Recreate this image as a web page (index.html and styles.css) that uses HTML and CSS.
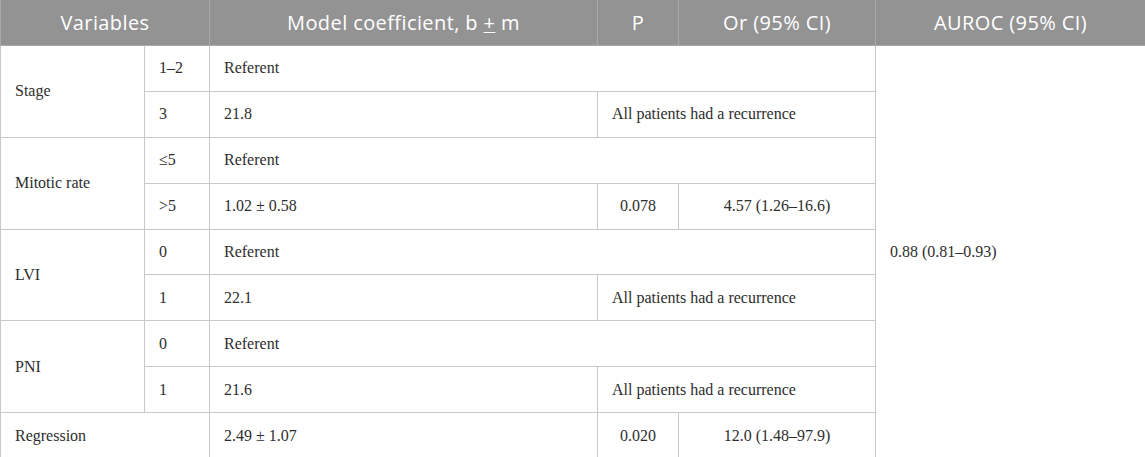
FILE: index.html
```html
<!DOCTYPE html>
<html>
<head>
<meta charset="utf-8">
<link rel="stylesheet" href="styles.css">
</head>
<body>
<table class="data">
  <colgroup>
    <col class="c1"><col class="c2"><col class="c3"><col class="c4"><col class="c5"><col class="c6">
  </colgroup>
  <thead>
    <tr>
      <th colspan="2">Variables</th>
      <th>Model coefficient, b <u>+</u> m</th>
      <th>P</th>
      <th>Or (95% CI)</th>
      <th>AUROC (95% CI)</th>
    </tr>
  </thead>
  <tbody>
    <tr>
      <td rowspan="2">Stage</td>
      <td>1–2</td>
      <td colspan="3">Referent</td>
      <td rowspan="9">0.88 (0.81–0.93)</td>
    </tr>
    <tr>
      <td>3</td>
      <td>21.8</td>
      <td colspan="2">All patients had a recurrence</td>
    </tr>
    <tr>
      <td rowspan="2">Mitotic rate</td>
      <td>≤5</td>
      <td colspan="3">Referent</td>
    </tr>
    <tr>
      <td>&gt;5</td>
      <td>1.02 ± 0.58</td>
      <td class="ctr">0.078</td>
      <td class="ctr">4.57 (1.26–16.6)</td>
    </tr>
    <tr>
      <td rowspan="2">LVI</td>
      <td>0</td>
      <td colspan="3">Referent</td>
    </tr>
    <tr>
      <td>1</td>
      <td>22.1</td>
      <td colspan="2">All patients had a recurrence</td>
    </tr>
    <tr>
      <td rowspan="2">PNI</td>
      <td>0</td>
      <td colspan="3">Referent</td>
    </tr>
    <tr>
      <td>1</td>
      <td>21.6</td>
      <td colspan="2">All patients had a recurrence</td>
    </tr>
    <tr>
      <td colspan="2">Regression</td>
      <td>2.49 ± 1.07</td>
      <td class="ctr">0.020</td>
      <td class="ctr">12.0 (1.48–97.9)</td>
    </tr>
  </tbody>
</table>
</body>
</html>
```
FILE: styles.css
```css
html, body {
  margin: 0;
  padding: 0;
  background: #ffffff;
}

.data {
  width: 1145px;
  table-layout: fixed;
  border-collapse: collapse;
}

.c1 { width: 144px; }
.c2 { width: 65px; }
.c3 { width: 388px; }
.c4 { width: 81px; }
.c5 { width: 197px; }
.c6 { width: 270px; }

.data th {
  height: 45px;
  padding: 0 8px;
  background: #939393;
  color: #ffffff;
  font-family: "Open Sans", "Liberation Sans", sans-serif;
  font-weight: 400;
  font-size: 20px;
  letter-spacing: 0.4px;
  text-align: center;
  vertical-align: middle;
  border: 1px solid #a9a9a9;
  border-top: none;
}

.data th u {
  text-decoration-thickness: 1px;
  text-underline-offset: 2px;
}

.data td {
  height: 44.9px;
  padding: 0 14px;
  font-family: "Liberation Serif", "Times New Roman", serif;
  font-size: 16px;
  color: #2e2e2e;
  text-align: left;
  vertical-align: middle;
  border: 1px solid #c8c8c8;
}

.data td.ctr {
  text-align: center;
}
```
